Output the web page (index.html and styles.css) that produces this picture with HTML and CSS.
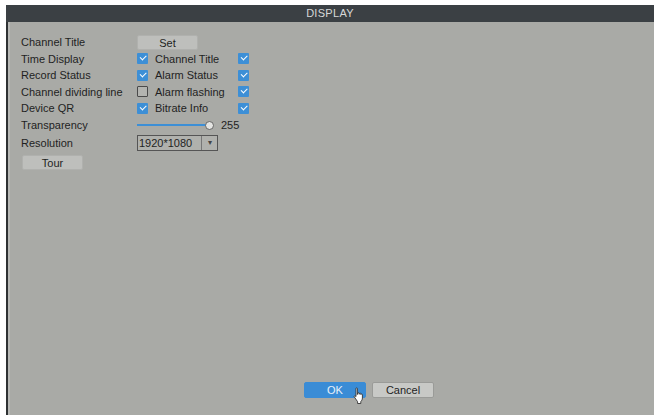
FILE: index.html
```html
<html>
<head>
    <meta name="viewport" content="width=device-width, initial-scale=1.0" />
    <title>DISPLAY</title>
    <link rel="stylesheet" href="styles.css">
</head>
<body>
    <div class="window">
        <header class="titlebar">DISPLAY</header>
        <div class="content">
            <div class="form">
                <div class="row">
                    <span class="label">Channel Title</span>
                    <span class="btn set">Set</span>
                </div>
                <div class="row">
                    <span class="label">Time Display</span>
                    <span class="check on"></span>
                    <span class="label2">Channel Title</span>
                    <span class="check on"></span>
                </div>
                <div class="row">
                    <span class="label">Record Status</span>
                    <span class="check on"></span>
                    <span class="label2">Alarm Status</span>
                    <span class="check on"></span>
                </div>
                <div class="row">
                    <span class="label">Channel dividing line</span>
                    <span class="check"></span>
                    <span class="label2">Alarm flashing</span>
                    <span class="check on"></span>
                </div>
                <div class="row">
                    <span class="label">Device QR</span>
                    <span class="check on"></span>
                    <span class="label2">Bitrate Info</span>
                    <span class="check on"></span>
                </div>
                <div class="row">
                    <span class="label">Transparency</span>
                    <span class="slider"><span class="track"></span><span class="knob"></span></span>
                    <span class="value">255</span>
                </div>
                <div class="row tall">
                    <span class="label">Resolution</span>
                    <span class="select"><span class="sel-text">1920*1080</span><span class="sel-arrow">&#9662;</span></span>
                </div>
                <div class="row tall">
                    <span class="btn tour">Tour</span>
                </div>
            </div>
            <div class="footer">
                <span class="btn primary">OK
                    <svg class="cursor" width="12" height="17" viewBox="0 0 12 17">
                        <path d="M3 1.5c0-.8 1.4-.8 1.4 0v6l.3-1.3c.2-.7 1.3-.6 1.3.1l.2 1 .3-.8c.3-.6 1.3-.4 1.3.3v.8l.4-.4c.4-.4 1.2-.1 1.2.5v3.3c0 1.6-.8 2.8-1.6 3.6v1.9H4.6v-1.8L1.3 9.9c-.5-.6.1-1.4.8-1L3 9.6z" fill="#fff" stroke="#333" stroke-width="0.9" stroke-linejoin="round"/>
                    </svg>
                </span>
                <span class="btn cancel">Cancel</span>
            </div>
        </div>
    </div>
</body>
</html>
```

FILE: styles.css
```css
html, body {
    margin: 0;
    background-color: #fff;
    font-family: "Liberation Sans", Arial, sans-serif;
    font-size: 11px;
    color: #1f1f1f;
}
.window {
    margin: 5px 6px 0 6px;
    width: 648px;
    height: 410px;
    display: flex;
    flex-direction: column;
}
.titlebar {
    height: 17px;
    line-height: 17px;
    background-color: #3b4044;
    color: #d6d8d8;
    text-align: center;
    font-size: 11px;
    letter-spacing: 0.3px;
}
.content {
    flex: 1;
    background-color: #a9aaa6;
    border-left: 2px solid #2e3133;
    box-shadow: inset 2px 0 0 #b8b9b6;
    display: flex;
    flex-direction: column;
    padding: 12px 0 0 13px;
}
.form {
    flex: 1;
    display: flex;
    flex-direction: column;
}
.row {
    height: 16.5px;
    display: flex;
    flex-direction: row;
    align-items: center;
}
.row.tall {
    height: 19px;
}
.label {
    width: 116px;
}
.label2 {
    width: 90px;
    padding-left: 7px;
    box-sizing: border-box;
}
.check {
    box-sizing: border-box;
    width: 11px;
    height: 11px;
    border: 1px solid #4a4a4a;
    border-radius: 1px;
    background-color: #b3b4b0;
    position: relative;
}
.check.on {
    border: none;
    background-color: #3d8fd6;
}
.check.on::after {
    content: "";
    position: absolute;
    left: 3px;
    top: 2px;
    width: 5px;
    height: 2.5px;
    border-left: 1.5px solid #fff;
    border-bottom: 1.5px solid #fff;
    transform: rotate(-45deg);
}
.btn {
    display: inline-flex;
    align-items: center;
    justify-content: center;
    box-sizing: border-box;
    height: 15px;
    width: 61px;
    border-radius: 2px;
    background-color: #bebfbc;
    border: 1px solid #b0b1ae;
}
.btn.set {
    margin-top: 1px;
}
.btn.tour {
    margin-left: 1px;
    margin-top: 2px;
}
.slider {
    width: 78px;
    height: 10px;
    position: relative;
    display: flex;
    align-items: center;
}
.track {
    width: 70px;
    height: 2px;
    background-color: #3d8fd6;
}
.knob {
    position: absolute;
    left: 68px;
    top: 1px;
    box-sizing: border-box;
    width: 9px;
    height: 9px;
    border-radius: 50%;
    border: 1px solid #666;
    background-color: #e4e4e2;
}
.value {
    margin-left: 6px;
}
.select {
    display: flex;
    box-sizing: border-box;
    width: 81px;
    height: 16px;
    border: 1px solid #555;
    background-color: #b0b1ad;
}
.sel-text {
    flex: 1;
    line-height: 14px;
    padding-left: 1px;
}
.sel-arrow {
    width: 15px;
    border-left: 1px solid #777;
    text-align: center;
    line-height: 14px;
    font-size: 8px;
    color: #444;
}
.footer {
    display: flex;
    flex-direction: row;
    justify-content: flex-start;
    gap: 6px;
    padding: 0 0 17px 296px;
    margin-left: -13px;
}
.footer .btn {
    height: 16px;
    width: 62px;
    font-size: 11px;
}
.btn.primary {
    background-color: #3a8cd6;
    border-color: #3a8cd6;
    color: #e8f1fa;
    position: relative;
}
.btn.cancel {
    background-color: #c8c9c6;
    border-color: #9a9b98;
}
.cursor {
    position: absolute;
    left: 48px;
    top: 4px;
}
```
